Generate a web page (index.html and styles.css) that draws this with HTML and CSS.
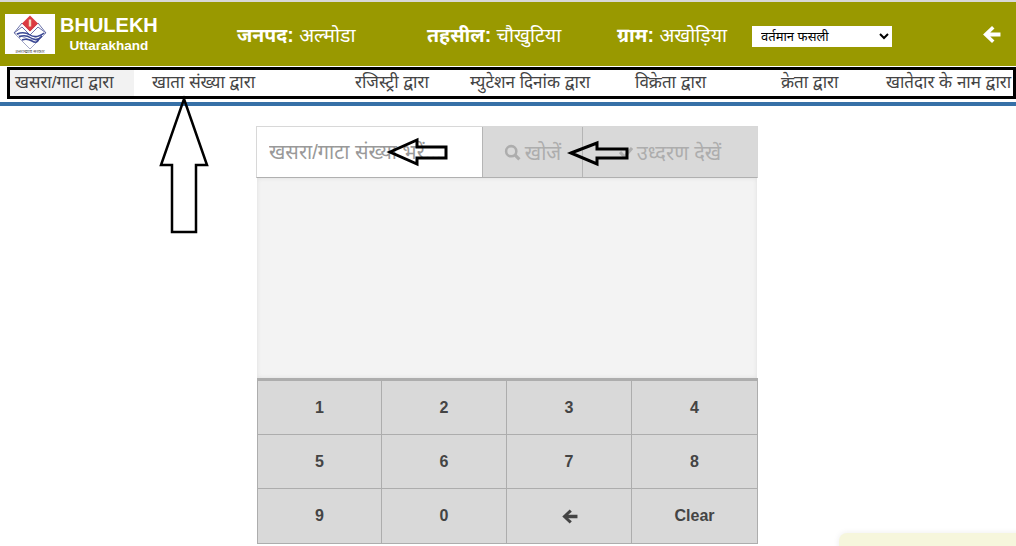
FILE: index.html
```html
<!DOCTYPE html>
<html lang="hi">
<head>
<meta charset="utf-8">
<title>Bhulekh Uttarakhand</title>
<link rel="stylesheet" href="styles.css">
</head>
<body>
<header class="topbar">
  <div class="brand">
    <div class="logo">
      <svg viewBox="0 0 50 40" width="50" height="40">
        <path d="M25 26 L41 19 L25 35 L9 19 Z" fill="#fff" stroke="#8a8fb8" stroke-width=".8"/>
        <path d="M9 19 L17 9 L25 17 L33 9 L41 19 L33 13 L25 21 L17 13 Z" fill="#fff" stroke="#5a62a0" stroke-width=".9"/>
        <path d="M25 1.500 L33 9.500 L25 17.500 L17 9.500 Z" fill="#dc3b42"/>
        <rect x="23.800" y="5.500" width="2.400" height="7" fill="#f3d9c0"/>
        <path d="M12 20 Q19 17 25 21 T39 19 M14 23 Q20 20 26 24 T37 22 M17 26 Q22 24 27 27 T34 25" fill="none" stroke="#3a4794" stroke-width="1.500"/>
        <text class="logo-cap" x="25" y="38.500" text-anchor="middle">उत्तराखण्ड सरकार</text>
      </svg>
    </div>
    <div class="brand-text">
      <div class="brand-name">BHULEKH</div>
      <div class="brand-sub">Uttarakhand</div>
    </div>
  </div>
  <div class="info info-janpad"><b>जनपद:</b> अल्मोडा</div>
  <div class="info info-tehsil"><b>तहसील:</b> चौखुटिया</div>
  <div class="info info-gram"><b>ग्राम:</b> अखोड़िया</div>
  <select class="season"><option>वर्तमान फसली</option></select>
  <svg class="back" viewBox="0 0 18 18" width="19" height="19"><path d="M9.500 1 L1 9 L9.500 17 L11.800 14.700 L7.800 10.900 H17.500 V7.100 H7.800 L11.800 3.300 Z" fill="#fff"/></svg>
</header>
<nav class="tabs">
  <a class="tab tab-active t1">खसरा/गाटा द्वारा</a>
  <a class="tab t2">खाता संख्या द्वारा</a>
  <a class="tab t3">रजिस्ट्री द्वारा</a>
  <a class="tab t4">म्युटेशन दिनांक द्वारा</a>
  <a class="tab t5">विक्रेता द्वारा</a>
  <a class="tab t6">क्रेता द्वारा</a>
  <a class="tab t7">खातेदार के नाम द्वारा</a>
</nav>
<main class="panel">
  <div class="searchrow">
    <input class="search" placeholder="खसरा/गाटा संख्या भरें...">
    <button class="act act-search">
      <svg viewBox="0 0 16 16" width="17" height="17"><circle cx="6.800" cy="6.800" r="4.800" fill="none" stroke="#adadad" stroke-width="2.400"/><path d="M10.500 10.500 L14.500 14.500" stroke="#adadad" stroke-width="3"/></svg>
      <span>खोजें</span>
    </button>
    <button class="act act-view">
      <svg viewBox="0 0 14 14" width="14" height="14"><path d="M1 7 L5.500 12 L13 3" fill="none" stroke="#adadad" stroke-width="3"/></svg>
      <span>उध्दरण देखें</span>
    </button>
  </div>
  <div class="results"></div>
  <div class="keypad">
    <button class="key">1</button><button class="key">2</button><button class="key">3</button><button class="key">4</button>
    <button class="key">5</button><button class="key">6</button><button class="key">7</button><button class="key">8</button>
    <button class="key">9</button><button class="key">0</button>
    <button class="key"><svg viewBox="0 0 16 16" width="17" height="17"><path d="M8.200 1.500 L1.200 8 L8.200 14.500 L10.200 12.500 L6.800 9.600 H15.500 V6.400 H6.800 L10.200 3.500 Z" fill="#444"/></svg></button>
    <button class="key">Clear</button>
  </div>
</main>
<div class="notice"></div>
<svg class="marks" viewBox="0 0 1016 546" width="1016" height="546">
  <rect x="8.500" y="68.500" width="1006" height="29" fill="none" stroke="#000" stroke-width="3"/>
  <path d="M184 99 L207 165 H196 V232 H172 V165 H161 Z" fill="none" stroke="#000" stroke-width="2.500"/>
  <path d="M390 152 L417 140 V147 H446 V158 H417 V164 Z" fill="none" stroke="#000" stroke-width="3"/>
  <path d="M571 153 L597 143 V149 H627 V158 H597 V164 Z" fill="none" stroke="#000" stroke-width="3"/>
</svg>
</body>
</html>
```
FILE: styles.css
```css
* { box-sizing: border-box; }
html, body { margin: 0; height: 546px; overflow: hidden; }
body {
  position: relative;
  background: #fff;
  border-top: 2px solid #d8d8d8;
  font-family: "Liberation Sans", "Noto Sans", "Noto Sans Devanagari", sans-serif;
  color: #333;
}
.topbar {
  height: 64px;
  background: #999900;
  display: flex;
  align-items: center;
  color: #fff;
  padding-left: 5px;
}
.brand { display: flex; align-items: center; width: 232px; }
.logo { width: 50px; height: 40px; background: #fff; display: flex; }
.logo-cap { font-size: 4.500px; fill: #555; }
.brand-text { margin-left: 5px; font-weight: 700; text-align: center; }
.brand-name { font-size: 20px; line-height: 23px; }
.brand-sub { font-size: 13.500px; line-height: 17px; }
.info { font-size: 19.500px; white-space: nowrap; }
.info b { font-weight: 700; }
.info-janpad { width: 190px; }
.info-tehsil { width: 190px; }
.info-gram { width: 135px; }
.season {
  width: 140px; height: 21px; margin-top: 4px; font-size: 13px; background: #fff; border: 0; padding: 0 5px; color: #000;
  font-family: inherit;
}
.back { margin-left: 90px; }
.tabs {
  height: 39px;
  margin-top: 1px;
  display: flex;
  align-items: stretch;
  border-bottom: 4px solid #3670a7;
  padding-left: 8px;
  font-size: 17px;
}
.tab { color: #444; white-space: nowrap; padding: 4px 7px 0; line-height: 24px; }
.tab-active { background: #f2f2f2; width: 126px; height: 31px; }
.t2 { width: 209px; padding-left: 18px; }
.t3 { width: 108px; padding-left: 12px; }
.t4 { width: 172px; padding-left: 19px; }
.t5 { width: 142px; padding-left: 12px; }
.t6 { width: 108px; padding-left: 16px; }
.t7 { padding-left: 13px; padding-right: 0; }
.panel { width: 502px; margin: 20px 0 0 256px; }
.searchrow { height: 52px; display: flex; border: 1px solid #d8d8d8; border-bottom: 1px solid #b0b0b0; }
.search {
  width: 225px; border: 0; outline: 0; padding: 0 12px; font-size: 20px; font-family: inherit; color: #333; background: #fff;
}
.search::placeholder { color: #999; opacity: 1; }
.act {
  background: #d9d9d9; border: 0; border-left: 1px solid #b5b5b5; color: #adadad; font-size: 20px; font-family: inherit;
  display: flex; align-items: center; justify-content: center; gap: 4px; padding: 0;
}
.act-search { width: 100px; }
.act-view { flex: 1; }
.results { height: 200px; margin: 0 1px; background: #f3f3f3; box-shadow: inset 0 0 4px #ddd; }
.keypad {
  display: grid;
  grid-template-columns: 124px repeat(3, 125px);
  grid-auto-rows: 54px;
  margin-left: 1px;
  border: 1px solid #adadad;
  border-top: 3px solid #adadad;
  background: #d9d9d9;
}
.key {
  background: #d9d9d9; border: 0; border-right: 1px solid #adadad; border-bottom: 1px solid #adadad;
  font: 700 16px "Liberation Sans", sans-serif; color: #444; padding: 0;
  display: flex; align-items: center; justify-content: center;
}
.key:nth-child(4n) { border-right: 0; }
.key:nth-child(n+9) { border-bottom: 0; }
.notice {
  position: absolute; left: 839px; top: 531px; width: 200px; height: 40px;
  background: #f6f6dc; border-radius: 8px 0 0 0; box-shadow: 0 0 6px rgba(0,0,0,.08);
}
.marks { position: absolute; left: 0; top: -2px; pointer-events: none; }
```
